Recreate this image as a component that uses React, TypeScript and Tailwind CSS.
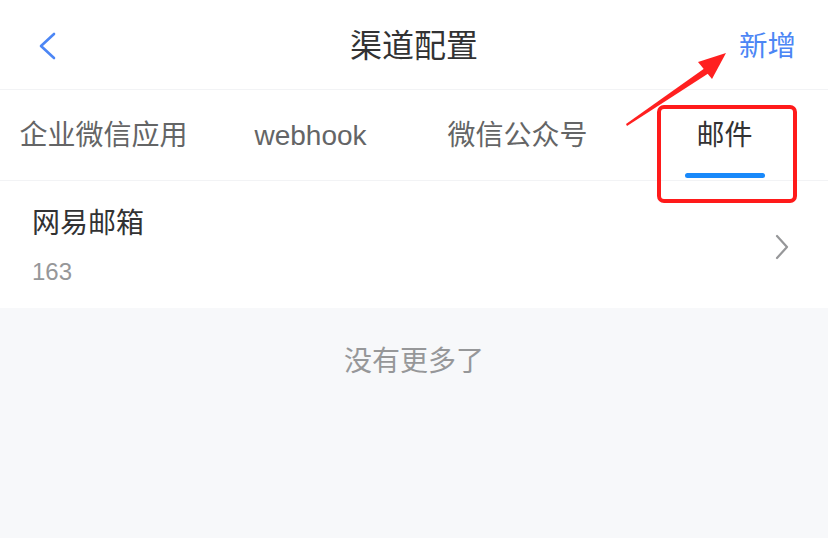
import React from "react";

const tabs = ["企业微信应用", "webhook", "微信公众号", "邮件"];

export default function App() {
  const active = 3;
  return (
    <div
      className="relative h-[538px] w-[828px] overflow-hidden bg-[#f7f8fa]"
      style={{ fontFamily: '"Liberation Sans", "Noto Sans CJK SC", sans-serif' }}
    >
      <header className="grid h-[90px] grid-cols-[1fr_auto_1fr] items-center border-b border-[#f2f3f5] bg-white px-[32px] pt-[3px]">
        <button className="ml-[6px] flex h-[30px] w-[24px] items-center">
          <svg width="20" height="28" viewBox="0 0 20 28" fill="none">
            <polyline
              points="16,2 3,14 16,26"
              stroke="#4c86f5"
              strokeWidth="2.6"
              strokeLinecap="round"
              strokeLinejoin="round"
            />
          </svg>
        </button>
        <h1 className="text-[32px] leading-none text-[#323233]">渠道配置</h1>
        <span className="justify-self-end text-[28.5px] leading-none text-[#4c86f5]">新增</span>
      </header>

      <nav className="flex h-[91px] border-b border-[#f2f3f5] bg-white">
        {tabs.map((t, i) => (
          <div key={t} className="relative flex flex-1 items-center justify-center pt-[2px]">
            <span
              className={
                i === active
                  ? "text-[28px] leading-none text-[#323233]"
                  : "text-[28px] leading-none text-[#646566]"
              }
            >
              {t}
            </span>
            {i === active && (
              <span className="absolute bottom-[2px] h-[5px] w-[80px] rounded-full bg-[#1989fa]" />
            )}
          </div>
        ))}
      </nav>

      <div className="flex h-[127px] items-center justify-between bg-white pl-[32px] pr-[38px]">
        <div className="flex flex-col gap-[22px] pt-[4px]">
          <span className="text-[28px] leading-none text-[#323233]">网易邮箱</span>
          <span className="text-[24px] leading-none text-[#969799]">163</span>
        </div>
        <svg width="16" height="26" viewBox="0 0 16 26" fill="none" className="mt-[4px]">
          <polyline
            points="3,2 13,13 3,24"
            stroke="#969799"
            strokeWidth="2.2"
            strokeLinecap="round"
            strokeLinejoin="round"
          />
        </svg>
      </div>

      <div className="flex justify-center pt-[40px]">
        <span className="text-[28px] leading-none text-[#969799]">没有更多了</span>
      </div>

      {/* annotation overlay */}
      <div className="absolute left-[657px] top-[105px] h-[98px] w-[140px] rounded-[7px] border-[4px] border-[#ff1a1a]" />
      <svg className="absolute left-0 top-0" width="828" height="538" viewBox="0 0 828 538">
        <polygon points="626,124 705,68 709,73 627,126" fill="#ff2020" />
        <polygon points="726,53 698,62 712,79" fill="#ff2020" />
      </svg>
    </div>
  );
}
